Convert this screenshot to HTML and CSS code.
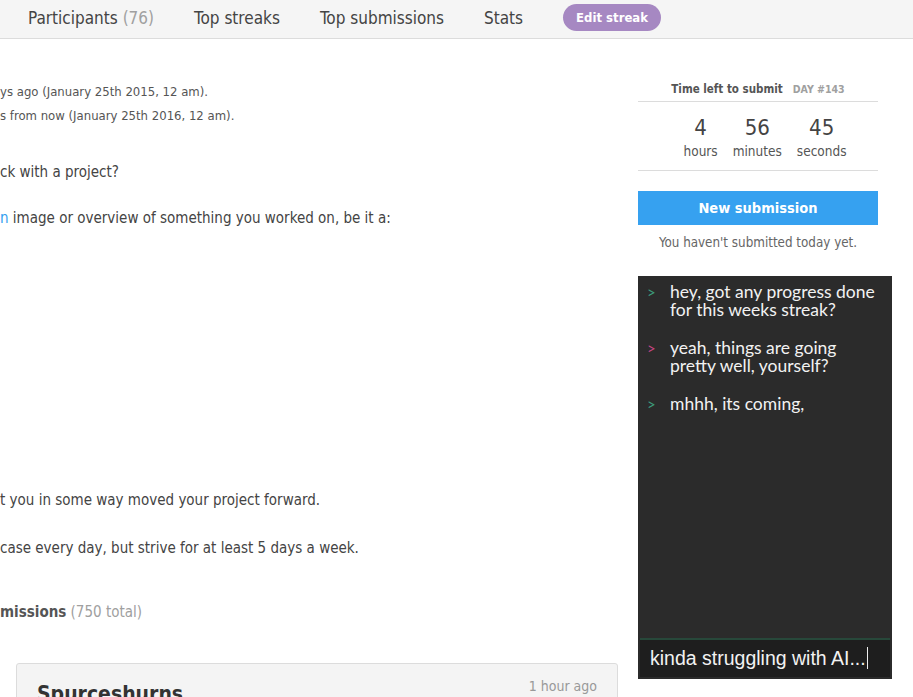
FILE: index.html
```html
<!DOCTYPE html>
<html>
<head>
<meta charset="utf-8">
<link rel="stylesheet" href="styles.css">
</head>
<body>
<nav class="nav">
  <a class="nav-item">Participants <span class="muted">(76)</span></a>
  <a class="nav-item">Top streaks</a>
  <a class="nav-item">Top submissions</a>
  <a class="nav-item">Stats</a>
  <a class="pill">Edit streak</a>
</nav>
<div class="main">
  <div class="content">
    <p class="small l1">ys ago (January 25th 2015, 12 am).</p>
    <p class="small l2">s from now (January 25th 2016, 12 am).</p>
    <p class="body l3">ck with a project?</p>
    <p class="body l4"><span class="link">n</span> image or overview of something you worked on, be it a:</p>
    <p class="body l5">t you in some way moved your project forward.</p>
    <p class="body l6"> case every day, but strive for at least 5 days a week.</p>
    <p class="body l7"><b>missions</b> <span class="muted">(750 total)</span></p>
    <div class="card">
      <div class="card-name">Spurceshurns</div>
      <div class="card-time">1 hour ago</div>
    </div>
  </div>
  <aside class="side">
    <div class="timer-head"><b>Time left to submit</b><span class="day">DAY #143</span></div>
    <div class="countdown">
      <div class="unit"><div class="num">4</div><div class="lbl">hours</div></div>
      <div class="unit"><div class="num">56</div><div class="lbl">minutes</div></div>
      <div class="unit"><div class="num">45</div><div class="lbl">seconds</div></div>
    </div>
    <div class="btn">New submission</div>
    <div class="note">You haven't submitted today yet.</div>
    <div class="chat">
      <div class="msgs">
        <div class="msg"><span class="arrow green">&gt;</span><span class="mtext">hey, got any progress done for this weeks streak?</span></div>
        <div class="msg"><span class="arrow pink">&gt;</span><span class="mtext">yeah, things are going pretty well, yourself?</span></div>
        <div class="msg"><span class="arrow green">&gt;</span><span class="mtext">mhhh, its coming,</span></div>
      </div>
      <div class="input">kinda struggling with AI...<span class="caret"></span></div>
    </div>
  </aside>
</div>
</body>
</html>
```
FILE: styles.css
```css
* { box-sizing: border-box; }
html, body { margin: 0; padding: 0; }
body {
  width: 913px;
  height: 697px;
  overflow: hidden;
  background: #fff;
  font-family: "Liberation Sans Narrow", "DejaVu Sans Condensed", "Liberation Sans", sans-serif;
  color: #444;
}
.nav {
  height: 39px;
  background: #f5f5f5;
  border-bottom: 1px solid #dcdcdc;
  display: flex;
  align-items: center;
  padding-left: 28px;
  gap: 40px;
}
.nav-item {
  font-size: 17px;
  color: #444;
  padding-bottom: 2px;
}
.muted { color: #a0a0a0; font-weight: normal; }
.pill {
  background: #a688c2;
  color: #fff;
  font-weight: bold;
  font-size: 13px;
  height: 27px;
  line-height: 27px;
  padding: 0 13px;
  border-radius: 14px;
  margin-bottom: 4px;
}
.main {
  display: flex;
}
.content {
  width: 618px;
  flex: none;
  padding-top: 43px;
}
.content p { margin: 0; white-space: nowrap; }
.small { font-size: 13px; line-height: 20px; color: #555; }
.body { font-size: 15px; line-height: 22px; color: #444; }
.l2 { margin-top: 4px !important; }
.l3 { margin-top: 35px !important; }
.l4 { margin-top: 24px !important; }
.l5 { margin-top: 260px !important; }
.l6 { margin-top: 26px !important; }
.l7 { margin-top: 42px !important; color: #555; }
.l7 b { color: #555; }
.link { color: #33a0f0; }
.card {
  margin: 40px 0 0 16px;
  width: 602px;
  height: 80px;
  background: #f4f4f4;
  border: 1px solid #dcdcdc;
  border-radius: 3px;
  display: flex;
  justify-content: space-between;
  padding: 14px 20px 0 20px;
}
.card-name { font-size: 21px; font-weight: bold; color: #333; margin-top: 4px; }
.card-time { font-size: 14px; color: #999; }
.side {
  margin-left: 20px;
  width: 240px;
  flex: none;
  padding-top: 41px;
}
.timer-head {
  text-align: center;
  font-size: 11.5px;
  color: #555;
  padding-bottom: 3px;
  border-bottom: 1px solid #dcdcdc;
  line-height: 18px;
}
.timer-head b { color: #555; }
.day { color: #a0a0a0; font-weight: bold; font-size: 10.5px; margin-left: 10px; }
.countdown {
  display: flex;
  justify-content: center;
  gap: 15px;
  padding: 13px 0 9px 14px;
  border-bottom: 1px solid #dcdcdc;
}
.unit { text-align: center; }
.num { font-size: 22px; line-height: 26px; color: #444; }
.lbl { font-size: 13.5px; line-height: 20px; color: #555; }
.btn {
  margin-top: 20px;
  height: 34px;
  line-height: 34px;
  background: #36a1f0;
  color: #fff;
  text-align: center;
  font-weight: bold;
  font-size: 14.5px;
}
.note {
  text-align: center;
  font-size: 13.3px;
  color: #666;
  margin-top: 8px;
  line-height: 20px;
}
.chat {
  margin-top: 23px;
  width: 254px;
  height: 403px;
  background: #2b2b2b;
  display: flex;
  flex-direction: column;
  padding: 0 2px 2px;
}
.msgs { flex: 1; padding: 7px 0 0 7px; }
.msg {
  display: flex;
  font-family: Lato, "Liberation Sans", sans-serif;
  font-size: 17.5px;
  line-height: 18px;
  margin-bottom: 20px;
}
.arrow { width: 23px; flex: none; font-size: 15px; }
.green { color: #3d9c7c; }
.pink { color: #c24480; }
.mtext { color: #f2f2f2; width: 210px; }
.input {
  height: 39px;
  border-top: 2px solid #27483a;
  background: #1e1e1e;
  color: #f2f2f2;
  font-family: "Liberation Sans", Arial, sans-serif;
  font-size: 19.5px;
  line-height: 37px;
  padding-left: 10px;
}
.caret {
  display: inline-block;
  width: 1px;
  height: 22px;
  background: #eee;
  vertical-align: -4px;
  margin-left: 1px;
}
```
